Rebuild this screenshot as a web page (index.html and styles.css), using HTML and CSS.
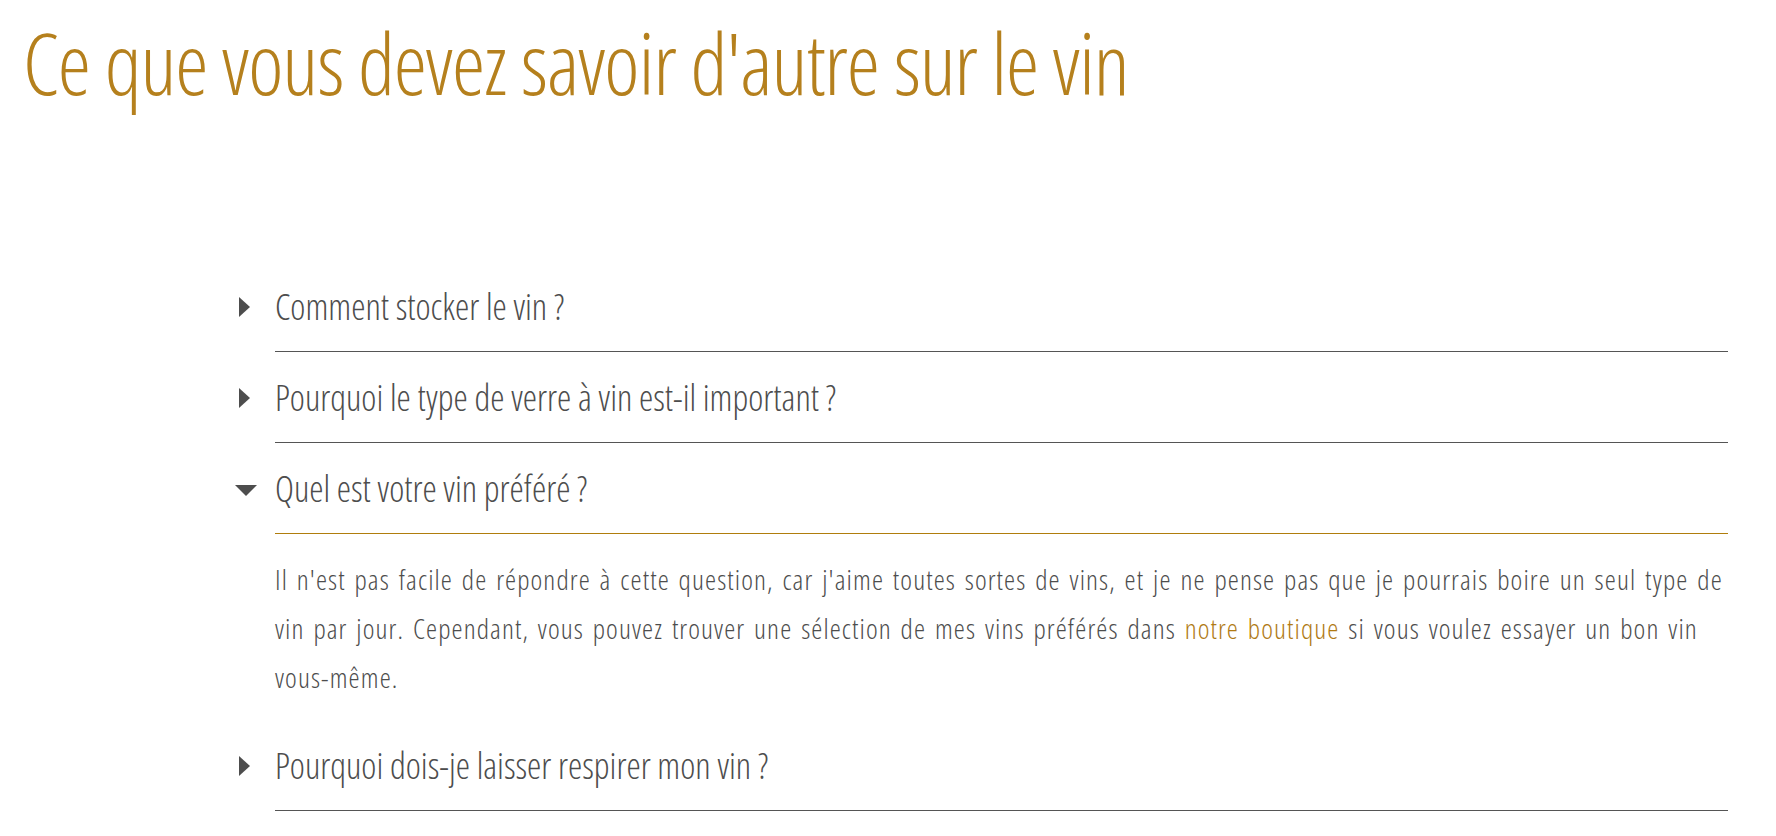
FILE: index.html
```html
<!DOCTYPE html>
<html lang="fr">
  <head>
    <meta charset="utf-8">
    <title>Ce que vous devez savoir d'autre sur le vin</title>
    <link rel="stylesheet" href="styles.css">
  </head>
  <body>
    <h1 class="page-title">Ce que vous devez savoir d'autre sur le vin</h1>

    <div class="faq">
      <details class="faq-item">
        <summary class="faq-question"><span class="faq-text">Comment stocker le vin ?</span></summary>
        <p class="faq-answer">Conservez vos bouteilles couchées, à l'abri de la lumière et à température constante.</p>
      </details>
      <details class="faq-item">
        <summary class="faq-question"><span class="faq-text">Pourquoi le type de verre à vin est-il important ?</span></summary>
        <p class="faq-answer">La forme du verre influence les arômes et la façon dont le vin arrive en bouche.</p>
      </details>
      <details class="faq-item" open>
        <summary class="faq-question"><span class="faq-text">Quel est votre vin préféré ?</span></summary>
        <p class="faq-answer">Il n'est pas facile de répondre à cette question, car j'aime toutes sortes de vins, et je ne pense pas que je pourrais boire un seul type de vin par jour. Cependant, vous pouvez trouver une sélection de mes vins préférés dans <a href="#">notre boutique</a> si vous voulez essayer un bon vin vous-même.</p>
      </details>
      <details class="faq-item">
        <summary class="faq-question"><span class="faq-text">Pourquoi dois-je laisser respirer mon vin ?</span></summary>
        <p class="faq-answer">L'aération permet au vin de s'ouvrir et de libérer ses arômes.</p>
      </details>
    </div>
  </body>
</html>
```

FILE: styles.css
```css
body {
  margin: 0;
  font-family: "Open Sans", "Noto Sans", sans-serif;
  font-stretch: 75%;
  font-weight: 300;
  color: #4d4d4d;
  background: #fff;
}

.page-title {
  margin: 5px 0 0 23px;
  font-size: 84px;
  font-weight: 300;
  letter-spacing: -1px;
  line-height: normal;
  color: #b5801d;
}

.faq {
  margin: 141px 48px 0 239px;
}

.faq-question {
  list-style: none;
  display: grid;
  grid-template-columns: 36px 1fr;
  cursor: pointer;
  font-size: 36px;
  line-height: 48px;
}

.faq-question::-webkit-details-marker {
  display: none;
}

.faq-question::before {
  content: "";
  align-self: center;
  width: 0;
  height: 0;
  margin-top: 1px;
  border-left: 11px solid #4d4d4d;
  border-top: 10px solid transparent;
  border-bottom: 10px solid transparent;
}

.faq-item[open] > .faq-question::before {
  margin-top: 4px;
  margin-left: -4px;
  border-left: 11px solid transparent;
  border-right: 11px solid transparent;
  border-top: 11px solid #4d4d4d;
  border-bottom: 0;
}

.faq-text {
  padding: 22px 0 20px;
  border-bottom: 1px solid #555;
}

.faq-item[open] .faq-text {
  border-bottom-color: #b07d0c;
}

.faq-answer {
  margin: 0 0 0 36px;
  padding: 21px 0 18px;
  font-size: 28px;
  letter-spacing: 1.1px;
  word-spacing: 2.5px;
  line-height: 49px;
}

.faq-answer a {
  color: #b07a14;
  text-decoration: none;
}
```
